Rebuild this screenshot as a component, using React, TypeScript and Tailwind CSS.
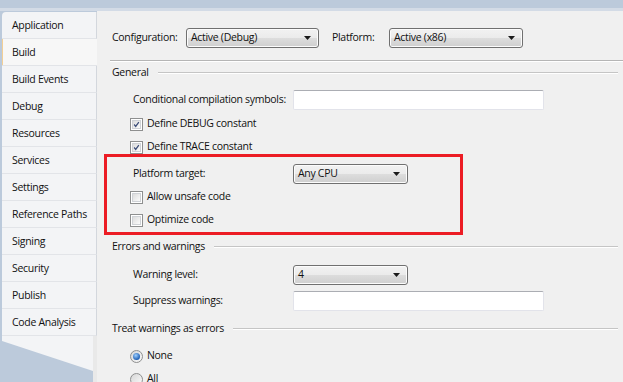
import React from 'react';

const tabs = [
  'Application',
  'Build',
  'Build Events',
  'Debug',
  'Resources',
  'Services',
  'Settings',
  'Reference Paths',
  'Signing',
  'Security',
  'Publish',
  'Code Analysis',
];

function Select({ value, width }: { value: string; width: string }) {
  return (
    <div
      className={`${width} h-[20px] shrink-0 flex items-center justify-between pl-[4px] pr-[7px] rounded-[3px] border border-[#707070] bg-[linear-gradient(to_bottom,#f2f2f2_0%,#ebebeb_50%,#dddddd_50%,#cfcfcf_100%)] shadow-[inset_0_0_0_1px_#fcfcfc]`}
    >
      <span className="text-[#111]">{value}</span>
      <svg width="7" height="4" viewBox="0 0 7 4">
        <path d="M0 0 H7 L3.5 4 Z" fill="#1a1a1a" />
      </svg>
    </div>
  );
}

function TextBox({ width }: { width: string }) {
  return (
    <div
      className={`${width} h-[20px] shrink-0 bg-white border border-[#e2e3ea] border-t-[#abadb3] rounded-[2px]`}
    />
  );
}

function CheckBox({ checked, label }: { checked?: boolean; label: string }) {
  return (
    <div className="flex items-center h-[16px] pl-[33px]">
      <div className="w-[13px] h-[13px] border border-[#8e8f8f] bg-white p-[1px]">
        <div className="w-full h-full border border-[#cfd2d6] bg-[linear-gradient(to_bottom_right,#dcdcdc,#fbfbfb)] flex items-center justify-center">
          {checked && (
            <svg width="9" height="9" viewBox="0 0 9 9">
              <path d="M1.5 4.5 L3.5 7 L7.5 1.5" fill="none" stroke="#3c4d78" strokeWidth="1.6" />
            </svg>
          )}
        </div>
      </div>
      <span className="ml-[4px]">{label}</span>
    </div>
  );
}

function Radio({ checked, label }: { checked?: boolean; label: string }) {
  return (
    <div className="flex items-center h-[16px] pl-[33px]">
      <div className="w-[13px] h-[13px] rounded-full border border-[#8e8f8f] bg-[linear-gradient(to_bottom_right,#d6d6d6,#fbfbfb)] flex items-center justify-center">
        {checked && (
          <div className="w-[7px] h-[7px] rounded-full bg-[radial-gradient(circle_at_40%_35%,#9fd0ff,#1f5fb4_70%)]" />
        )}
      </div>
      <span className="ml-[4px]">{label}</span>
    </div>
  );
}

function Section({ title }: { title: string }) {
  return (
    <div className="flex items-center h-[14px] pl-[15px] pr-[5px]">
      <span>{title}</span>
      <div className="flex-1 ml-[9px] border-t border-[#c5c5c5] border-b border-b-white" />
    </div>
  );
}

function Row({ label, children }: { label: string; children: React.ReactNode }) {
  return (
    <div className="flex items-center">
      <span className="w-[196px] shrink-0 pl-[36px]">{label}</span>
      {children}
    </div>
  );
}

export default function App() {
  return (
    <div
      className="w-[623px] h-[382px] overflow-hidden whitespace-nowrap bg-[#bccadb] text-[10.5px] tracking-[-0.3px] text-[#111] flex flex-col"
      style={{ fontFamily: '"Open Sans", "Noto Sans", sans-serif' }}
    >
      <div className="h-[11px] shrink-0 border-b-[3px] border-[#d3dbe6]" />
      <div className="flex flex-1 min-h-0 overflow-hidden">
        {/* tab strip */}
        <div className="w-[97px] shrink-0 flex flex-col">
          <div className="flex flex-col shrink-0 mt-[1px] ml-[2px] rounded-tl-[4px] overflow-hidden">
            {tabs.map(t =>
              t === 'Build' ? (
                <div
                  key={t}
                  className="h-[27px] shrink-0 -ml-[2px] pl-[9px] pt-[2px] flex items-center bg-[#f7f7f7] border-l-[3px] border-[#f3cf95] border-b border-b-[#e2e4e8]"
                >
                  {t}
                </div>
              ) : (
                <div
                  key={t}
                  className="h-[27px] shrink-0 pl-[10px] pt-[2px] flex items-center bg-[#f3f4f6] border-b border-[#e2e4e8] border-r border-r-[#d3d7dd]"
                >
                  {t}
                </div>
              )
            )}
          </div>
          <div className="flex flex-1">
            <div className="flex-1 bg-[#f3f4f6] ml-[2px] [clip-path:polygon(0_0,100%_0,100%_35px,0_5px)]" />
            <div className="w-[4px] bg-[#e9e9e9]" />
          </div>
        </div>

        {/* content */}
        <div className="flex-1 bg-[#f0f0f0] flex flex-col [&>*]:shrink-0">
          <div className="flex items-center h-[20px] mt-[17px] pl-[15px]">
            <span className="w-[74px]">Configuration:</span>
            <Select value="Active (Debug)" width="w-[133px]" />
            <span className="ml-[13px] w-[57px]">Platform:</span>
            <Select value="Active (x86)" width="w-[134px]" />
          </div>

          <div className="mt-[12px] ml-[13px] border-t border-[#b5b5b5] border-b border-b-white" />

          <div className="mt-[4px]">
            <Section title="General" />
          </div>

          <div className="mt-[10px] h-[20px]">
            <Row label="Conditional compilation symbols:">
              <TextBox width="w-[251px]" />
            </Row>
          </div>

          <div className="mt-[6px]">
            <CheckBox checked label="Define DEBUG constant" />
          </div>
          <div className="mt-[8px] h-[14px] flex items-center">
            <CheckBox checked label="Define TRACE constant" />
          </div>

          <div className="ml-[7px] w-[359px] h-[81px] border-[3px] border-[#ec1c24] flex flex-col">
            <div className="mt-[7px] h-[20px]">
              <div className="flex items-center">
                <span className="w-[186px] shrink-0 pl-[26px]">Platform target:</span>
                <Select value="Any CPU" width="w-[115px]" />
              </div>
            </div>
            <div className="mt-[5px] -ml-[10px]">
              <CheckBox label="Allow unsafe code" />
            </div>
            <div className="mt-[7px] -ml-[10px]">
              <CheckBox label="Optimize code" />
            </div>
          </div>

          <div className="mt-[5px]">
            <Section title="Errors and warnings" />
          </div>

          <div className="mt-[11px] h-[20px]">
            <Row label="Warning level:">
              <Select value="4" width="w-[115px]" />
            </Row>
          </div>

          <div className="mt-[6px] h-[20px]">
            <Row label="Suppress warnings:">
              <TextBox width="w-[251px]" />
            </Row>
          </div>

          <div className="mt-[11px]">
            <Section title="Treat warnings as errors" />
          </div>

          <div className="mt-[12px]">
            <Radio checked label="None" />
          </div>
          <div className="mt-[7px]">
            <Radio label="All" />
          </div>
        </div>
      </div>
    </div>
  );
}
